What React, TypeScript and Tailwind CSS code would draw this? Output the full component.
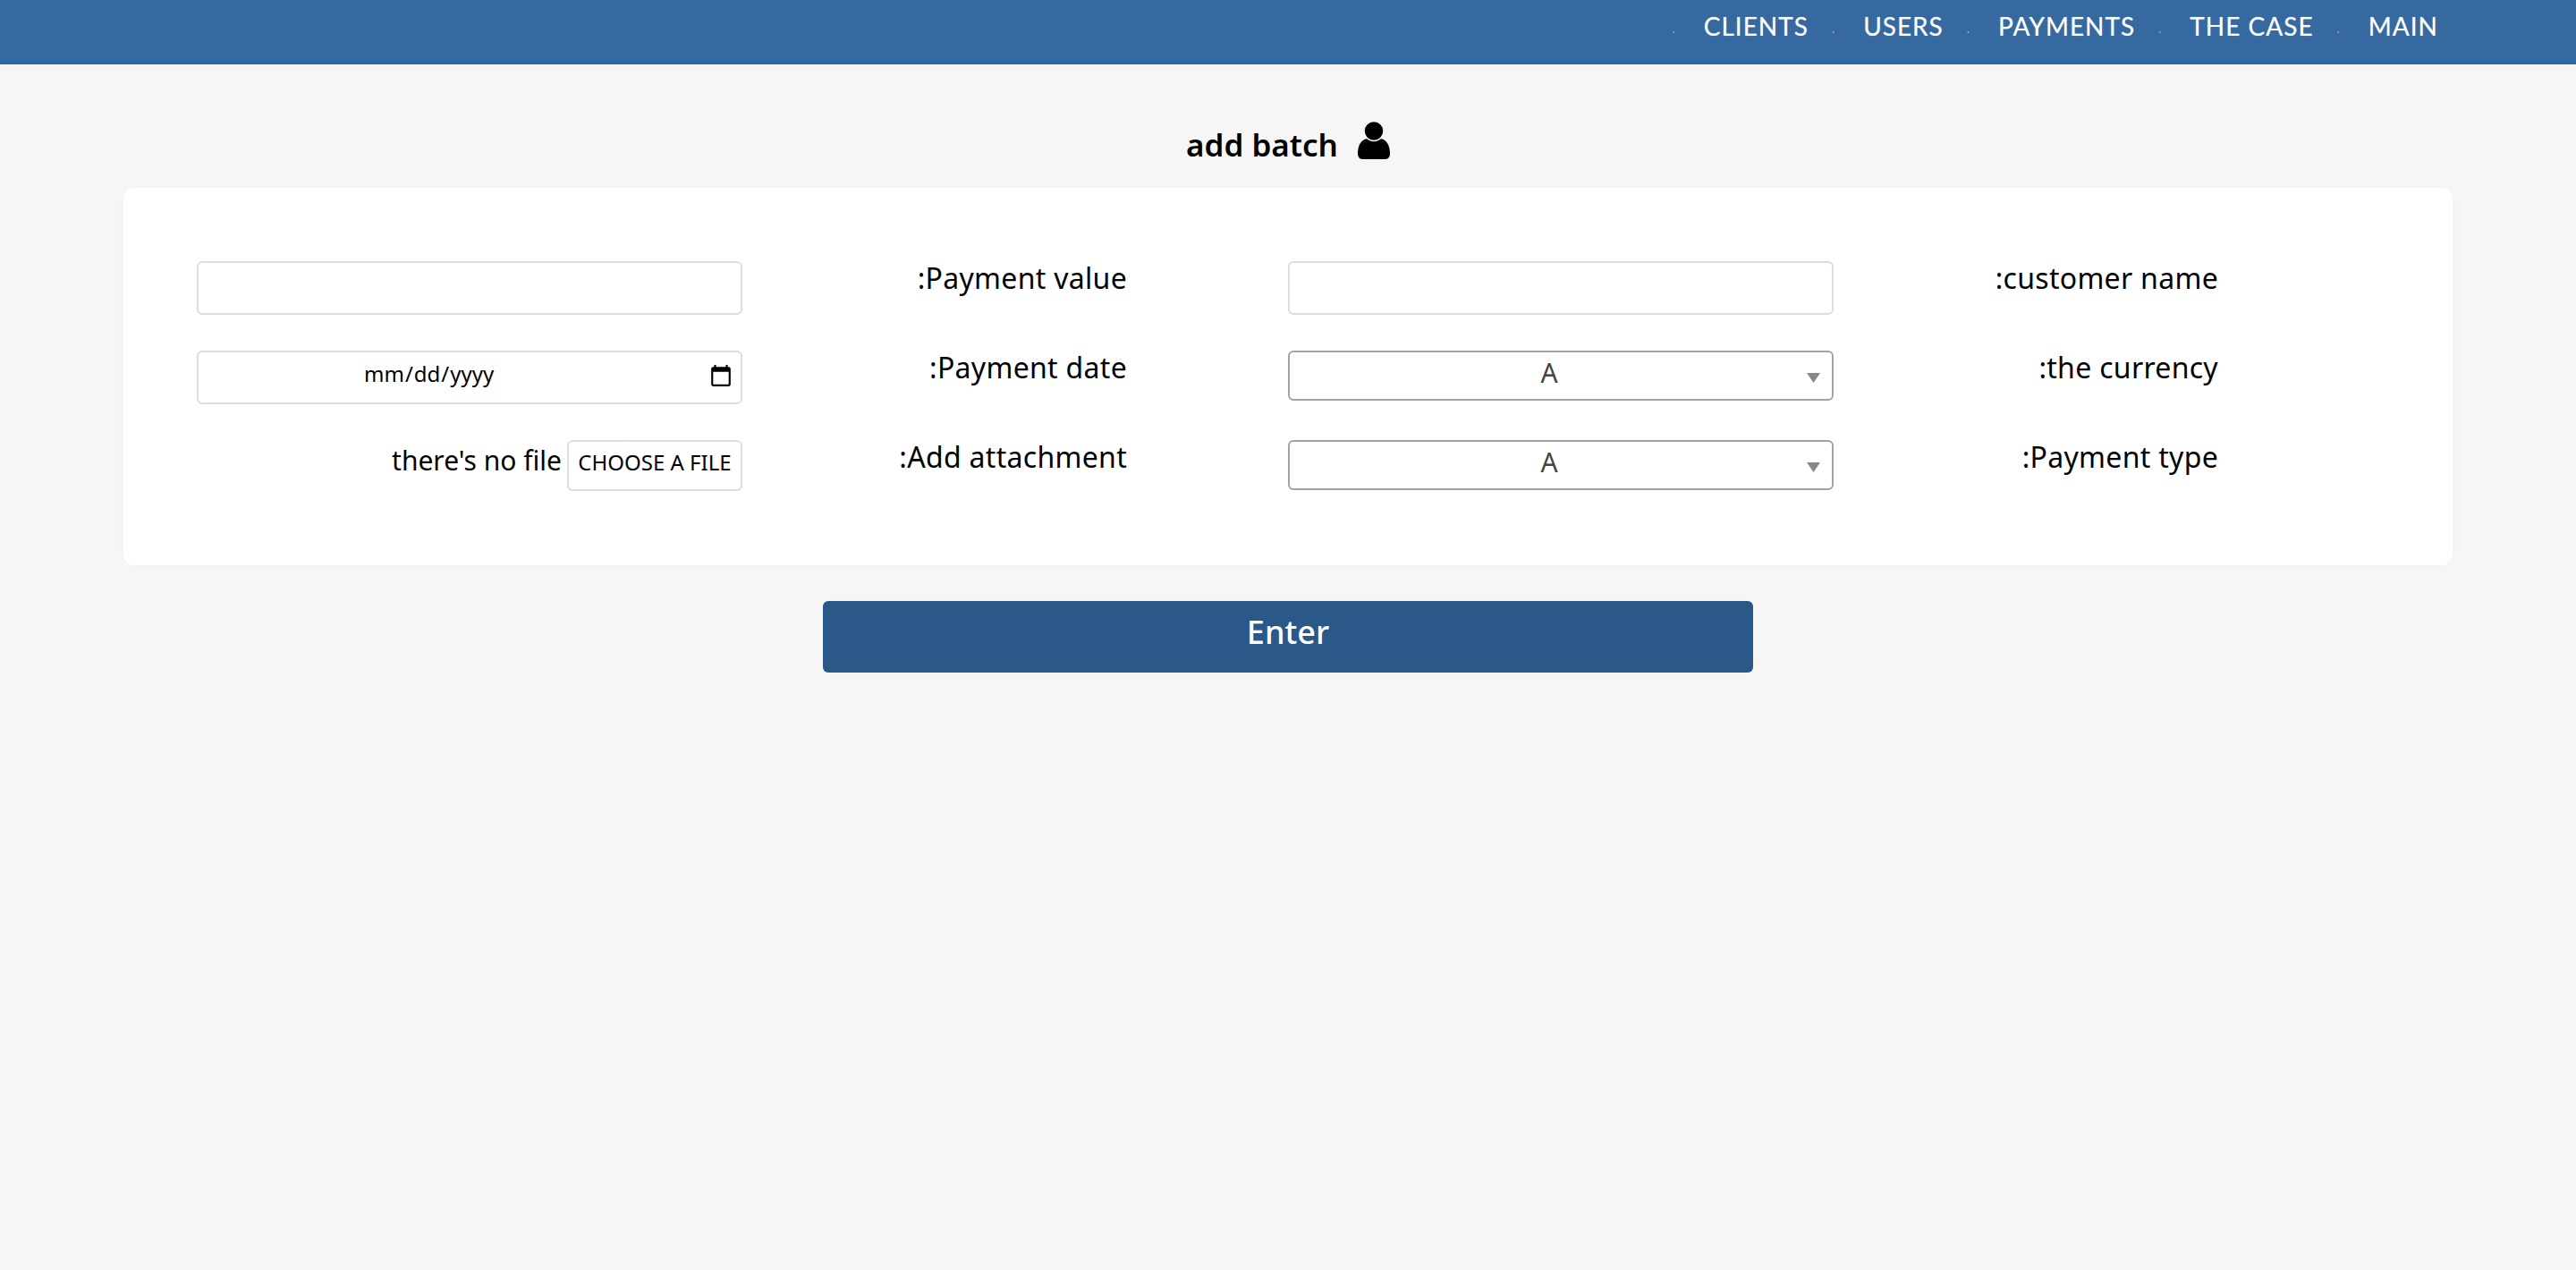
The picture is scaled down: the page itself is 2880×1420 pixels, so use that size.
const navItems = ['CLIENTS', 'USERS', 'PAYMENTS', 'THE CASE', 'MAIN'];

const Label = ({ text }: { text: string }) => (
  <div className="pr-[180px] text-right text-[32px] leading-[38px] tracking-[0.3px] text-black">{text}</div>
);

const TextInput = () => (
  <input
    type="text"
    className="block h-[60px] w-[610px] rounded-[6px] border-2 border-[#dddddd] bg-white outline-none"
  />
);

const SelectBox = () => (
  <div className="relative h-[56px] w-[610px]">
    <select className="block h-full w-full appearance-none rounded-[6px] border-2 border-[#a3a3a3] bg-white pb-[8px] pr-[26px] text-center text-[30px] text-[#444444] outline-none">
      <option>A</option>
    </select>
    <svg className="absolute right-[15px] top-[25px] h-[11px] w-[15px]" viewBox="0 0 15 11">
      <path d="M0 0h15L7.5 11z" fill="#888888" />
    </svg>
  </div>
);

export default function App() {
  return (
    <div className="min-h-[1420px] bg-[#f6f6f6] font-['Noto_Sans',sans-serif]">
      {/* Top bar */}
      <header className="h-[72px] border-b-[5px] border-[#2c67a8] bg-[#35699f]">
        <ul className="flex justify-end gap-[26px] pr-[154px] pt-[12px]">
          {navItems.map((item) => (
            <li key={item} className="flex items-start gap-[32px]">
              <span className="pt-[15px] text-[12px] leading-[12px] text-white/60">.</span>
              <span className="font-['Lato',sans-serif] text-[28px] leading-[34px] tracking-[1px] text-white [text-shadow:0_0_1px_rgba(255,255,255,0.5)]">
                {item}
              </span>
            </li>
          ))}
        </ul>
      </header>

      {/* Title */}
      <div className="flex h-[138px] items-start justify-center gap-[22px] pt-[73px]">
        <h1 className="text-[35px] font-semibold leading-[34px] text-black">add batch</h1>
        <svg className="-mt-[9px] h-[42px] w-[36px]" viewBox="0 0 36 42">
          <path d="M0 36C0 25 5 19 12 19h12c7 0 12 6 12 17 0 3-2 6-5 6H5c-3 0-5-3-5-6z" fill="#000" />
          <circle cx="18" cy="10.500" r="11" fill="#000" stroke="#f6f6f6" strokeWidth="1.500" />
        </svg>
      </div>

      {/* Form card */}
      <main className="mx-[138px] h-[422px] rounded-[12px] bg-white pl-[82px] pt-[82px] shadow-[0_0_4px_rgba(0,0,0,0.03)]">
        <div className="grid auto-rows-[100px] grid-cols-[610px_610px_610px_610px] items-start">
          <TextInput />
          <Label text=":Payment value" />
          <TextInput />
          <Label text=":customer name" />

          <input
            type="date"
            className="block h-[60px] w-[610px] rounded-[6px] border-2 border-[#dddddd] bg-white pb-[8px] pl-[184px] pr-[8px] text-[24px] text-black outline-none [&::-webkit-calendar-picker-indicator]:mt-[8px] [&::-webkit-calendar-picker-indicator]:h-[30px] [&::-webkit-calendar-picker-indicator]:w-[28px] [&::-webkit-calendar-picker-indicator]:p-0"
          />
          <Label text=":Payment date" />
          <SelectBox />
          <Label text=":the currency" />

          <div className="flex items-start justify-end gap-[6px]">
            <span className="pt-[4px] text-[30px] leading-[38px] text-black">there's no file</span>
            <button
              type="button"
              className="h-[57px] w-[196px] rounded-[6px] border-2 border-[#dddddd] bg-white pb-[8px] text-[24px] text-black"
            >
              CHOOSE A FILE
            </button>
          </div>
          <Label text=":Add attachment" />
          <SelectBox />
          <Label text=":Payment type" />
        </div>
      </main>

      {/* Submit */}
      <div className="flex justify-center pt-[40px]">
        <button
          type="button"
          className="h-[80px] w-[1040px] rounded-[6px] bg-[#2a5889] pb-[10px] text-[36px] font-medium text-white"
        >
          Enter
        </button>
      </div>
    </div>
  );
}
